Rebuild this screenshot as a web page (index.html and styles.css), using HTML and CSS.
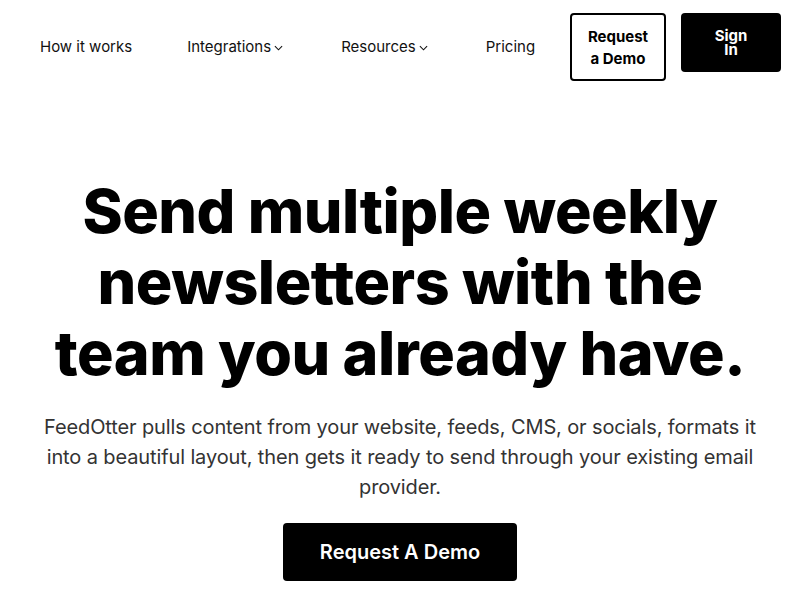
FILE: index.html
```html
<!DOCTYPE html>
<html lang="en">
<head>
  <meta charset="UTF-8">
  <meta name="viewport" content="width=device-width, initial-scale=1.0">
  <title>FeedOtter</title>
  <link rel="stylesheet" href="styles.css">
</head>
<body>

<header class="topbar">
  <nav class="nav-links">
    <a href="#" class="first">How it works</a>
    <a href="#">Integrations<svg class="chev" viewBox="0 0 10 6" width="9" height="6"><path d="M1 1l4 4 4-4" fill="none" stroke="#111" stroke-width="1.2"/></svg></a>
    <a href="#">Resources<svg class="chev" viewBox="0 0 10 6" width="9" height="6"><path d="M1 1l4 4 4-4" fill="none" stroke="#111" stroke-width="1.2"/></svg></a>
    <a href="#">Pricing</a>
  </nav>
  <div class="nav-actions">
    <a href="#" class="btn-outline">Request a Demo</a>
    <a href="#" class="btn-dark">Sign In</a>
  </div>
</header>

<section class="hero">
  <h1>Send multiple weekly newsletters with the team you already have.</h1>
  <p>FeedOtter pulls content from your website, feeds, CMS, or socials, formats it into a beautiful layout, then gets it ready to send through your existing email provider.</p>
  <a href="#" class="btn-cta">Request A Demo</a>
</section>

</body>
</html>
```

FILE: styles.css
```css
body {
  font-family: Inter, "Noto Sans", sans-serif;
  margin: 0;
  padding: 0;
  background-color: #fff;
  color: #000;
}
a {
  text-decoration: none;
  color: inherit;
}
.topbar {
  display: flex;
  align-items: flex-start;
  padding: 13px 19px 0 40px;
}
.nav-links {
  display: flex;
  gap: 58px;
  margin-top: 24px;
  font-size: 15px;
  color: #111;
}
.nav-links a {
  display: flex;
  align-items: center;
}
.nav-links .first {
  margin-right: -3px;
}
.chev {
  margin-left: 3px;
  margin-top: 2px;
}
.nav-actions {
  display: flex;
  gap: 15px;
  margin-left: auto;
}
.btn-outline {
  box-sizing: border-box;
  width: 96px;
  height: 68px;
  border: 2px solid #000;
  border-radius: 4px;
  display: flex;
  align-items: center;
  justify-content: center;
  text-align: center;
  font-size: 15px;
  font-weight: 700;
  line-height: 22px;
  padding: 1px 14px 0;
}
.btn-dark {
  box-sizing: border-box;
  width: 100px;
  height: 59px;
  background-color: #000;
  color: #fff;
  border-radius: 4px;
  display: flex;
  align-items: center;
  justify-content: center;
  text-align: center;
  font-size: 15px;
  font-weight: 700;
  line-height: 14px;
  padding: 0 30px;
}
.hero {
  text-align: center;
  padding: 0 40px;
  margin-top: 95px;
}
.hero h1 {
  font-size: 61px;
  font-weight: 800;
  line-height: 71px;
  letter-spacing: -0.5px;
  margin: 0 0 23px;
}
.hero p {
  font-size: 20px;
  line-height: 30px;
  letter-spacing: -0.12px;
  color: #333;
  margin: 0 0 21px;
}
.btn-cta {
  display: inline-block;
  background-color: #000;
  color: #fff;
  border-radius: 4px;
  font-size: 20px;
  font-weight: 600;
  width: 234px;
  height: 58px;
  line-height: 58px;
}
```
